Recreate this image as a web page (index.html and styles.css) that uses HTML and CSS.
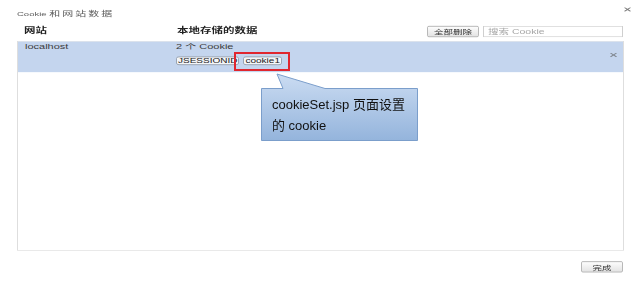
FILE: index.html
```html
<!DOCTYPE html>
<html lang="zh-CN">
<head>
    <meta charset="UTF-8">
    <title>Cookie 和网站数据</title>
    <link rel="stylesheet" href="styles.css">
</head>
<body>
    <div class="dialog">
        <div class="titlebar">
            <span class="title">Cookie <span class="cn">和网站数据</span></span>
            <svg class="close" width="7" height="7" viewBox="0 0 7 7"><path d="M0.5 0.5L6.5 6.5M6.5 0.5L0.5 6.5" stroke="#7a7a7a" stroke-width="1.2"/></svg>
        </div>

        <div class="toolbar">
            <span class="col-site">网站</span>
            <span class="col-data">本地存储的数据</span>
            <div class="actions">
                <button type="button" class="btn">全部删除</button>
                <input type="text" class="search" placeholder="搜索 Cookie">
            </div>
        </div>

        <div class="list">
            <div class="row selected">
                <div class="site">localhost</div>
                <div class="data">
                    <div>2 个 Cookie</div>
                    <div class="chips">
                        <span class="chip">JSESSIONID</span>
                        <span class="chip">cookie1</span>
                    </div>
                </div>
                <svg class="remove" width="7" height="7" viewBox="0 0 7 7"><path d="M0.5 0.5L6.5 6.5M6.5 0.5L0.5 6.5" stroke="#808890" stroke-width="1.3"/></svg>
            </div>
        </div>

        <div class="footer">
            <button type="button" class="btn done">完成</button>
        </div>
    </div>

    <!-- annotation drawn on top of the screenshot -->
    <div class="mark"></div>
    <div class="callout">
        <svg class="bubble" width="160" height="70" viewBox="0 0 160 70">
            <defs>
                <linearGradient id="fill" x1="0" y1="0" x2="0" y2="1">
                    <stop offset="0" stop-color="#cbdcf2"/>
                    <stop offset="1" stop-color="#94b4dc"/>
                </linearGradient>
            </defs>
            <path d="M1.5 15.5H23L17 1L65 15.5H157.5V67.5H1.5Z" fill="url(#fill)" stroke="#7b9ecb" stroke-width="1"/>
        </svg>
        <div class="callout-text">cookieSet.jsp 页面设置<br>的 cookie</div>
    </div>
</body>
</html>
```

FILE: styles.css
```css
html, body {
    margin: 0;
    overflow: hidden;
    background-color: #fff;
}
body {
    position: relative;
}
.dialog {
    width: 643px;
    height: 452px;
    margin-bottom: -158px;
    display: flex;
    flex-direction: column;
    font-family: "Liberation Sans", "Noto Sans CJK SC", sans-serif;
    color: #222;
    transform: scaleY(0.65);
    transform-origin: 0 0;
}
.titlebar {
    height: 40px;
    display: flex;
    justify-content: space-between;
    padding: 0 12px 0 17px;
}
.title {
    margin-top: 12px;
    font-size: 9.5px;
    line-height: 18px;
    color: #606060;
}
.title .cn {
    font-size: 11px;
    letter-spacing: 2px;
}
.close {
    margin-top: 11px;
}
.toolbar {
    height: 17px;
    display: flex;
    padding: 0 20px 0 24px;
}
.col-site,
.col-data {
    font-size: 11.5px;
    font-weight: bold;
    line-height: 13px;
}
.col-site {
    width: 153px;
}
.col-data {
    flex: 1;
}
.actions {
    display: flex;
    gap: 4px;
}
.btn {
    width: 52px;
    height: 17px;
    padding: 0;
    font-family: inherit;
    font-size: 9.5px;
    color: #333;
    border: 1px solid #a9a9a9;
    border-radius: 2px;
    background: linear-gradient(#fdfdfd, #e3e3e3);
}
.search {
    box-sizing: border-box;
    width: 140px;
    height: 17px;
    padding: 0 4px;
    font-family: inherit;
    font-size: 10.5px;
    border: 1px solid #cfcfcf;
    outline: none;
}
.search::placeholder {
    color: #a6a6a6;
}
.list {
    box-sizing: border-box;
    height: 323px;
    margin: 6px 19px 0 17px;
    border: 1px solid #dedede;
}
.row {
    height: 47px;
    display: flex;
    padding-left: 7px;
    font-size: 11px;
    line-height: 14px;
    color: #3c3c3c;
}
.row.selected {
    background-color: #c4d5ee;
}
.site {
    width: 151px;
}
.data {
    flex: 1;
}
.chips {
    display: flex;
    gap: 4px;
    margin-top: 9px;
}
.chip {
    padding: 0 1px;
    font-size: 10px;
    line-height: 11px;
    color: #222;
    background-color: #f4f6f9;
    border: 1px solid #8c97a5;
    border-radius: 3px;
}
.remove {
    margin: 17px 6px 0 0;
}
.footer {
    display: flex;
    justify-content: flex-end;
    margin-top: 16px;
    padding-right: 20px;
}
.btn.done {
    width: 42px;
}
.mark {
    position: absolute;
    left: 234px;
    top: 52px;
    width: 56px;
    height: 19px;
    box-sizing: border-box;
    border: 2px solid #e0262e;
}
.callout {
    position: absolute;
    left: 260px;
    top: 73px;
    width: 160px;
    height: 70px;
}
.bubble {
    position: absolute;
    left: 0;
    top: 0;
}
.callout-text {
    position: relative;
    padding: 21px 0 0 12px;
    font-family: "Liberation Sans", "Noto Sans CJK SC", sans-serif;
    font-size: 13px;
    line-height: 21px;
    color: #111;
}
```
